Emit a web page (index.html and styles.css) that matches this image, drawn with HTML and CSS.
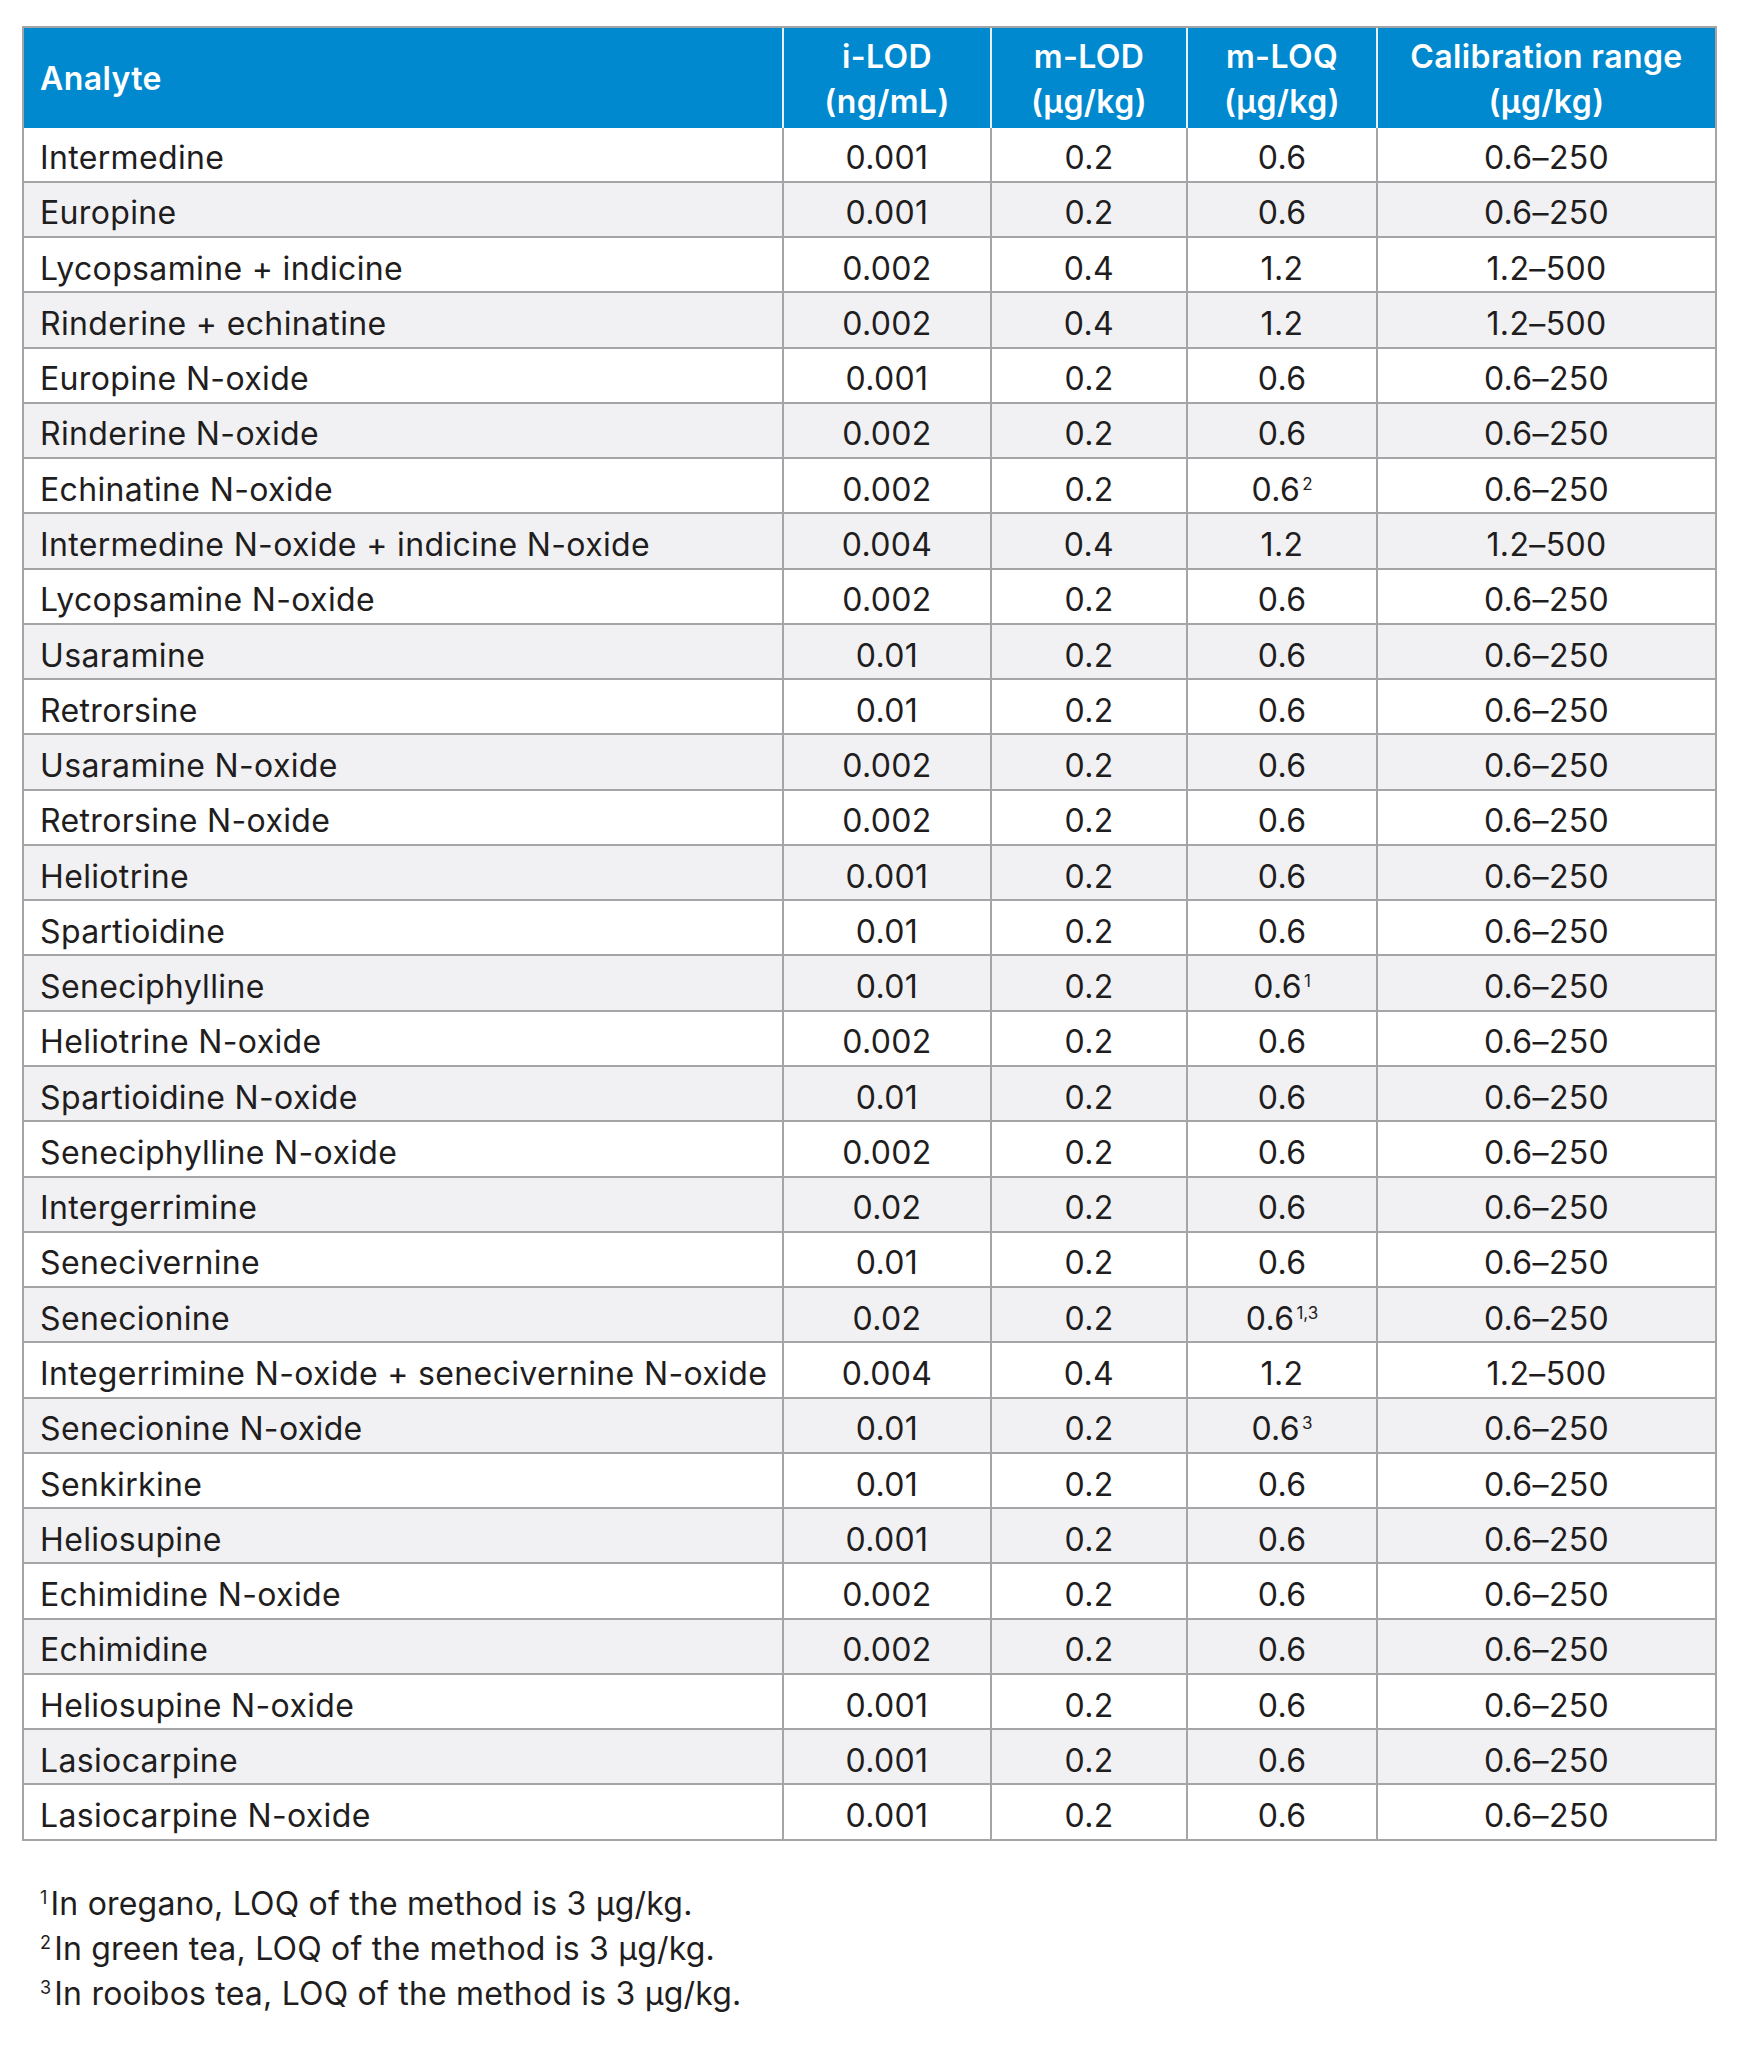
FILE: index.html
```html
<!DOCTYPE html>
<html lang="en">
<head>
<meta charset="utf-8">
<title>Analyte limits</title>
<link rel="stylesheet" href="styles.css">
</head>
<body>
<main class="page">
  <table class="data">
    <thead>
      <tr>
        <th class="c-name">Analyte</th>
        <th class="c-ilod">i-LOD<br>(ng/mL)</th>
        <th class="c-mlod">m-LOD<br>(µg/kg)</th>
        <th class="c-mloq">m-LOQ<br>(µg/kg)</th>
        <th class="c-cal">Calibration range<br>(µg/kg)</th>
      </tr>
    </thead>
    <tbody>
      <tr><td>Intermedine</td><td>0.001</td><td>0.2</td><td>0.6</td><td>0.6–250</td></tr>
      <tr><td>Europine</td><td>0.001</td><td>0.2</td><td>0.6</td><td>0.6–250</td></tr>
      <tr><td>Lycopsamine + indicine</td><td>0.002</td><td>0.4</td><td>1.2</td><td>1.2–500</td></tr>
      <tr><td>Rinderine + echinatine</td><td>0.002</td><td>0.4</td><td>1.2</td><td>1.2–500</td></tr>
      <tr><td>Europine N-oxide</td><td>0.001</td><td>0.2</td><td>0.6</td><td>0.6–250</td></tr>
      <tr><td>Rinderine N-oxide</td><td>0.002</td><td>0.2</td><td>0.6</td><td>0.6–250</td></tr>
      <tr><td>Echinatine N-oxide</td><td>0.002</td><td>0.2</td><td>0.6<sup class="fn">2</sup></td><td>0.6–250</td></tr>
      <tr><td>Intermedine N-oxide + indicine N-oxide</td><td>0.004</td><td>0.4</td><td>1.2</td><td>1.2–500</td></tr>
      <tr><td>Lycopsamine N-oxide</td><td>0.002</td><td>0.2</td><td>0.6</td><td>0.6–250</td></tr>
      <tr><td>Usaramine</td><td>0.01</td><td>0.2</td><td>0.6</td><td>0.6–250</td></tr>
      <tr><td>Retrorsine</td><td>0.01</td><td>0.2</td><td>0.6</td><td>0.6–250</td></tr>
      <tr><td>Usaramine N-oxide</td><td>0.002</td><td>0.2</td><td>0.6</td><td>0.6–250</td></tr>
      <tr><td>Retrorsine N-oxide</td><td>0.002</td><td>0.2</td><td>0.6</td><td>0.6–250</td></tr>
      <tr><td>Heliotrine</td><td>0.001</td><td>0.2</td><td>0.6</td><td>0.6–250</td></tr>
      <tr><td>Spartioidine</td><td>0.01</td><td>0.2</td><td>0.6</td><td>0.6–250</td></tr>
      <tr><td>Seneciphylline</td><td>0.01</td><td>0.2</td><td>0.6<sup class="fn">1</sup></td><td>0.6–250</td></tr>
      <tr><td>Heliotrine N-oxide</td><td>0.002</td><td>0.2</td><td>0.6</td><td>0.6–250</td></tr>
      <tr><td>Spartioidine N-oxide</td><td>0.01</td><td>0.2</td><td>0.6</td><td>0.6–250</td></tr>
      <tr><td>Seneciphylline N-oxide</td><td>0.002</td><td>0.2</td><td>0.6</td><td>0.6–250</td></tr>
      <tr><td>Intergerrimine</td><td>0.02</td><td>0.2</td><td>0.6</td><td>0.6–250</td></tr>
      <tr><td>Senecivernine</td><td>0.01</td><td>0.2</td><td>0.6</td><td>0.6–250</td></tr>
      <tr><td>Senecionine</td><td>0.02</td><td>0.2</td><td>0.6<sup class="fn">1,3</sup></td><td>0.6–250</td></tr>
      <tr><td>Integerrimine N-oxide + senecivernine N-oxide</td><td>0.004</td><td>0.4</td><td>1.2</td><td>1.2–500</td></tr>
      <tr><td>Senecionine N-oxide</td><td>0.01</td><td>0.2</td><td>0.6<sup class="fn">3</sup></td><td>0.6–250</td></tr>
      <tr><td>Senkirkine</td><td>0.01</td><td>0.2</td><td>0.6</td><td>0.6–250</td></tr>
      <tr><td>Heliosupine</td><td>0.001</td><td>0.2</td><td>0.6</td><td>0.6–250</td></tr>
      <tr><td>Echimidine N-oxide</td><td>0.002</td><td>0.2</td><td>0.6</td><td>0.6–250</td></tr>
      <tr><td>Echimidine</td><td>0.002</td><td>0.2</td><td>0.6</td><td>0.6–250</td></tr>
      <tr><td>Heliosupine N-oxide</td><td>0.001</td><td>0.2</td><td>0.6</td><td>0.6–250</td></tr>
      <tr><td>Lasiocarpine</td><td>0.001</td><td>0.2</td><td>0.6</td><td>0.6–250</td></tr>
      <tr><td>Lasiocarpine N-oxide</td><td>0.001</td><td>0.2</td><td>0.6</td><td>0.6–250</td></tr>
    </tbody>
  </table>

  <div class="notes">
    <p class="note"><sup class="note-mark">1</sup>In oregano, LOQ of the method is 3 µg/kg.</p>
    <p class="note"><sup class="note-mark">2</sup>In green tea, LOQ of the method is 3 µg/kg.</p>
    <p class="note"><sup class="note-mark">3</sup>In rooibos tea, LOQ of the method is 3 µg/kg.</p>
  </div>
</main>
</body>
</html>
```

FILE: styles.css
```css
* {
  box-sizing: border-box;
}

html, body {
  margin: 0;
  padding: 0;
  background: #ffffff;
}

body {
  font-family: Inter, "Liberation Sans", Arial, sans-serif;
  color: #1f1d1e;
}

.page {
  padding: 26px 0 0 22px;
}

.data {
  border-collapse: separate;
  border-spacing: 0;
  table-layout: fixed;
  width: 1695px;
  border-top: 2px solid #a5a5a7;
  border-left: 2px solid #a5a5a7;
  font-size: 32px;
}

.data th {
  height: 99.5px;
  padding: 2px 16px 0;
  background: #0089cf;
  color: #ffffff;
  font-weight: 600;
  line-height: 45px;
  letter-spacing: 0.4px;
  text-align: center;
  vertical-align: middle;
  border-right: 2px solid #e6f2fa;
}

.data th.c-name {
  text-align: left;
}

.data th.c-cal {
  border-right: 2px solid #a5a5a7;
}

.c-name { width: 760px; }
.c-ilod { width: 208px; }
.c-mlod { width: 196px; }
.c-mloq { width: 190px; }
.c-cal  { width: 339px; }

.data td {
  height: 55.27px;
  padding: 8px 16px 0;
  line-height: 40px;
  letter-spacing: 0.35px;
  text-align: center;
  vertical-align: middle;
  white-space: nowrap;
  border-right: 2px solid #a5a5a7;
  border-bottom: 2px solid #a5a5a7;
  font-weight: 400;
}

.data td:first-child {
  text-align: left;
}

.data tbody tr:nth-child(even) td {
  background: #f1f1f3;
}

.fn {
  font-size: 17px;
  line-height: 0;
  letter-spacing: 0;
  vertical-align: 11px;
  margin-left: 2px;
}

.notes {
  margin-top: 40px;
  padding-left: 18px;
}

.note {
  margin: 0;
  font-size: 32px;
  line-height: 45px;
  letter-spacing: 0.2px;
}

.note-mark {
  font-size: 18px;
  line-height: 0;
  vertical-align: 11px;
  margin-right: 3px;
}
```
